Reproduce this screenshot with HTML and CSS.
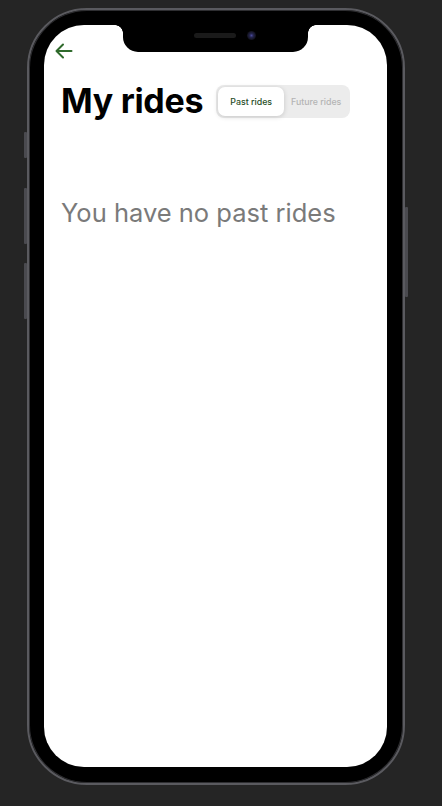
FILE: index.html
```html
<!DOCTYPE html>
<html lang="en">
<head>
<meta charset="utf-8">
<title>My rides</title>
<link rel="stylesheet" href="styles.css">
</head>
<body>
<div class="stage">
  <div class="phone">
    <span class="btn btn-silent"></span>
    <span class="btn btn-vol-up"></span>
    <span class="btn btn-vol-down"></span>
    <span class="btn btn-power"></span>
    <div class="screen">
      <div class="notch">
        <span class="speaker"></span>
        <span class="camera"></span>
      </div>
      <div class="content">
        <button class="back" aria-label="Back">
          <svg width="18" height="16" viewBox="0 0 18 16" fill="none" stroke="#2f6a2c" stroke-width="2" stroke-linecap="round" stroke-linejoin="round">
            <path d="M16.5 8H2"/>
            <path d="M8 1.5L1.5 8L8 14.5"/>
          </svg>
        </button>
        <div class="header">
          <h1 class="title">My rides</h1>
          <div class="segmented">
            <span class="seg seg-active">Past rides</span>
            <span class="seg">Future rides</span>
          </div>
        </div>
        <p class="empty">You have no past rides</p>
      </div>
    </div>
  </div>
</div>
</body>
</html>
```

FILE: styles.css
```css
* { box-sizing: border-box; }

html, body {
  margin: 0;
  padding: 0;
  background: #252525;
  font-family: Inter, "Noto Sans", sans-serif;
}

.stage {
  padding: 8px 0 0 27px;
  width: 442px;
  height: 806px;
}

.phone {
  position: relative;
  width: 378px;
  height: 777px;
  border-radius: 60px;
  background: #000;
  border: 2px solid #5a5a5f;
  box-shadow: inset 0 0 0 1px #2e2e31;
  padding: 15px 16px 16px 15px;
}

.btn {
  position: absolute;
  width: 3px;
  background: #4a4a4f;
  border-radius: 1px;
}
.btn-silent { left: -5px; top: 122px; height: 26px; }
.btn-vol-up { left: -5px; top: 178px; height: 56px; }
.btn-vol-down { left: -5px; top: 253px; height: 56px; }
.btn-power { right: -5px; top: 197px; height: 90px; }

.screen {
  position: relative;
  width: 343px;
  height: 742px;
  background: #fff;
  border-radius: 40px;
  overflow: hidden;
}

.notch {
  position: absolute;
  left: 79px;
  top: 0;
  width: 185px;
  height: 27px;
  background: #000;
  border-radius: 0 0 15px 15px;
}
.notch::before,
.notch::after {
  content: "";
  position: absolute;
  top: 0;
  width: 8px;
  height: 8px;
}
.notch::before {
  left: -8px;
  background: radial-gradient(circle at 0 8px, transparent 7.5px, #000 8px);
}
.notch::after {
  right: -8px;
  background: radial-gradient(circle at 8px 8px, transparent 7.5px, #000 8px);
}

.speaker {
  position: absolute;
  left: 71px;
  top: 8px;
  width: 42px;
  height: 5px;
  border-radius: 3px;
  background: #1a1a1a;
}

.camera {
  position: absolute;
  left: 124px;
  top: 6px;
  width: 9px;
  height: 9px;
  border-radius: 50%;
  background: radial-gradient(circle at 50% 50%, #4a4a9a 0, #23234a 2px, #101018 4.5px);
}

.content {
  padding: 18px 18px 0 11px;
}

.back {
  display: block;
  border: 0;
  background: none;
  padding: 0;
  margin: 0;
  height: 16px;
  line-height: 0;
  cursor: pointer;
}

.header {
  display: flex;
  align-items: center;
  gap: 13px;
  margin-top: 22px;
  padding-left: 6px;
}

.title {
  margin: 0;
  font-size: 34px;
  font-weight: 700;
  line-height: 40px;
  color: #000;
  letter-spacing: -0.3px;
}

.segmented {
  display: flex;
  align-items: stretch;
  width: 134px;
  height: 33px;
  padding: 2px;
  background: #ececec;
  border-radius: 8px;
}

.seg {
  flex: 1;
  display: flex;
  align-items: center;
  justify-content: center;
  font-size: 8.8px;
  font-weight: 500;
  color: #b4b4b4;
  border-radius: 7px;
}

.seg-active {
  flex: 0 0 66px;
  background: #fff;
  color: #1f4d1f;
  box-shadow: 0 1px 5px rgba(0,0,0,0.16);
}

.empty {
  margin: 76px 0 0 6px;
  font-size: 25.5px;
  font-weight: 400;
  color: #7a7a7a;
  line-height: 32px;
}
```
